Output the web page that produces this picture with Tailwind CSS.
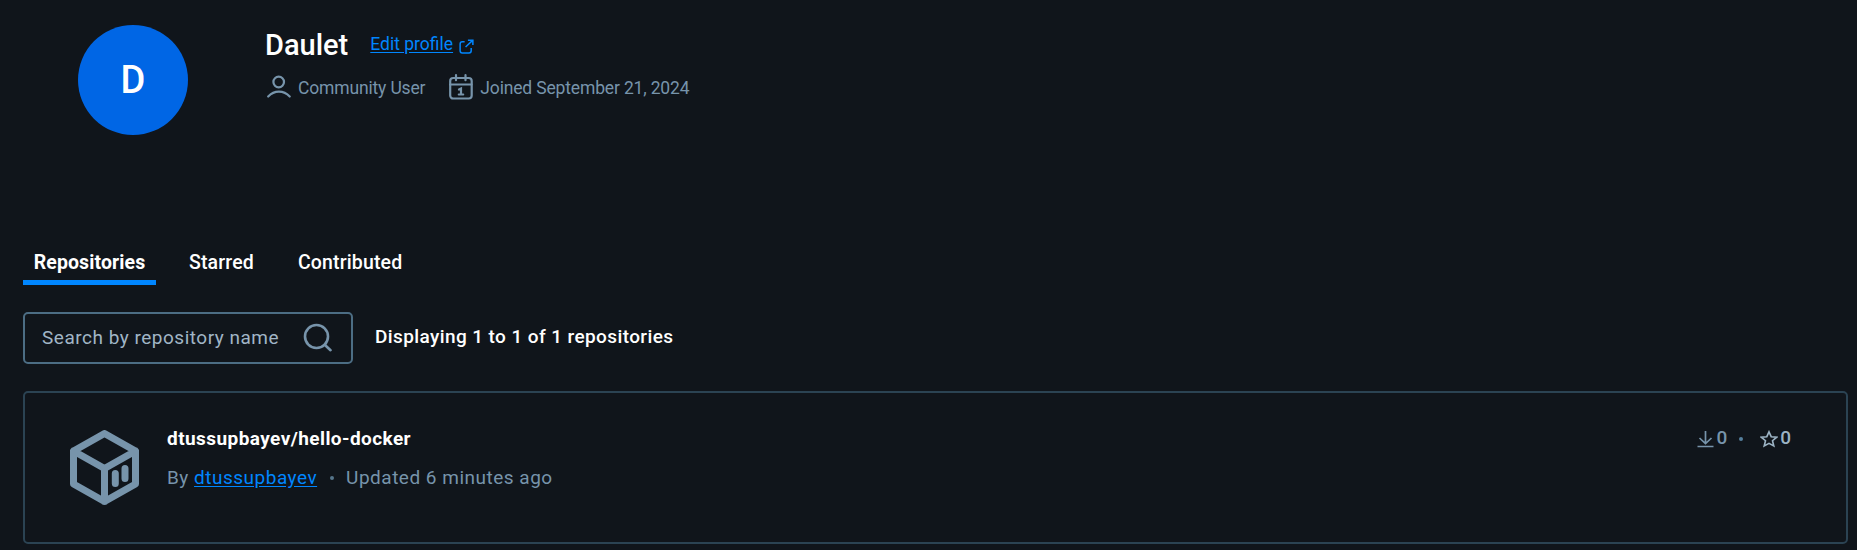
<!DOCTYPE html>
<html lang="en">
<head>
<meta charset="utf-8">
<title>Daulet</title>
<script src="https://cdn.jsdelivr.net/npm/@tailwindcss/browser@4"></script>
</head>
<body class="bg-[#10151b] font-['Roboto','Liberation_Sans',sans-serif] text-white h-[550px] overflow-hidden">
<header class="flex h-[233px] pl-[78px] pt-[25px]">
  <div class="flex size-[110px] shrink-0 items-center justify-center rounded-full bg-[#0066e5] text-[38px] font-medium">D</div>
  <div class="ml-[77px]">
    <div class="flex h-[38px] items-center">
      <h1 class="pt-px text-[29px] font-medium leading-[38px]">Daulet</h1>
      <a class="ml-[22px] flex items-center pt-px text-[17.5px] text-[#0086ff]"><span class="underline underline-offset-2">Edit profile</span>
        <svg class="ml-[6px] mt-[4px] size-[15px]" viewBox="0 0 16 16" fill="none" stroke="currentColor" stroke-width="1.6"><path d="M6 3H3.500A2.300 2.300 0 0 0 1.200 5.300v7.200a2.300 2.300 0 0 0 2.300 2.300h7.200a2.300 2.300 0 0 0 2.300-2.300V9.500M7 8.500 14.500 1.500M9.500 1.200h5.300v5.300"/></svg>
      </a>
    </div>
    <div class="mt-[9px] flex h-[32px] items-center text-[17.5px] tracking-[-0.16px] text-[#7794ab]">
      <svg class="ml-[2px] -mt-[2px] size-[24px]" viewBox="0 0 24 24" fill="none" stroke="currentColor" stroke-width="2.200" stroke-linecap="round"><circle cx="11.700" cy="7" r="5.300"/><path d="M1.200 21.500c6-6.500 15.500-6.500 21.500 0"/></svg>
      <span class="ml-[7px]">Community User</span>
      <svg class="-mt-[2px] ml-[24px] h-[26px] w-[24px]" viewBox="0 0 24 26" fill="none" stroke="currentColor" stroke-width="2.200" stroke-linecap="round"><rect x="1.200" y="4" width="21.500" height="20.500" rx="3"/><path d="M1 10.500h21.500M7 1.200v5M16.500 1.200v5"/><path d="M10 15.500l2-1v6M9.800 20.500h4.400"/></svg>
      <span class="ml-[7px]">Joined September 21, 2024</span>
    </div>
  </div>
</header>
<main class="pl-[23px] pr-[9px]">
  <nav class="flex h-[52px] text-[19.5px] font-medium tracking-[0.15px]">
    <a class="flex h-[52px] w-[133px] items-start justify-center border-b-5 border-[#0086ff] pt-[15px] font-bold tracking-[0.1px]">Repositories</a>
    <a class="ml-[33px] pt-[15px]">Starred</a>
    <a class="ml-[44px] pt-[15px]">Contributed</a>
  </nav>
  <div class="mt-[27px] flex h-[52px] items-center">
    <div class="flex h-[52px] w-[330px] items-center rounded-[5px] border-2 border-[#4c6d84] pl-[17px] text-[19px] tracking-[0.51px] text-[#a1b5c6]">
      <span>Search by repository name</span>
      <svg class="-mt-px ml-auto mr-[19px] size-[29px]" viewBox="0 0 29 29" fill="none" stroke="#7794ab" stroke-width="2.600" stroke-linecap="round"><circle cx="13.500" cy="13.500" r="11.500"/><path d="m21.700 21.700 5.800 5.500"/></svg>
    </div>
    <p class="-mt-[2px] ml-[22px] text-[19px] font-medium tracking-[0.4px]">Displaying 1 to 1 of 1 repositories</p>
  </div>
  <article class="mt-[27px] flex h-[153px] rounded-[5px] border-2 border-[#2b4353] text-[19px]">
    <svg class="ml-[45px] mt-[37px] h-[75px] w-[69px]" viewBox="0 0 69 75" fill="none" stroke="#7794ab" stroke-width="7" stroke-linejoin="round" stroke-linecap="round"><path d="M34.500 3.500 65.500 21v33L34.500 71.500 3.500 54V21zM3.500 21l31 17.500 31-17.500M34.500 38.500v33M45.300 43.500v10M55 38.500v10"/></svg>
    <div class="ml-[28px] mt-[31px]">
      <h2 class="h-[29px] leading-[29px] font-bold tracking-[0.43px]">dtussupbayev/hello-docker</h2>
      <p class="mt-[10px] flex h-[29px] items-center leading-[29px] tracking-[0.5px] text-[#7794ab]"><span>By <a class="text-[#0086ff] underline underline-offset-2">dtussupbayev</a></span><span class="ml-[13px] mr-[12px] size-[4px] rounded-full bg-[#56758b]"></span><span>Updated 6 minutes ago</span></p>
    </div>
    <div class="ml-auto mr-[55px] mt-[31px] flex h-[29px] items-center font-medium text-[#7794ab]">
      <svg class="h-[18px] w-[17px]" viewBox="0 0 17 18" fill="none" stroke="currentColor" stroke-width="1.700"><path d="M8.500 1v12.500M2.500 8l6 5.700 6-5.700M.5 16.500h16"/></svg>
      <span class="ml-[2px]">0</span>
      <span class="mx-[12px] size-[4px] rounded-full bg-[#56809d]"></span>
      <svg class="ml-[5px] size-[18px]" viewBox="0 0 18 18" fill="none" stroke="#9cb3c4" stroke-width="1.600"><path d="m9 1.800 2.200 4.900 5.500.5-4.200 3.500 1.300 5.300L9 13.300 4.200 16l1.300-5.300L1.300 7.200l5.500-.5z"/></svg>
      <span class="ml-[2px] text-[#9cb3c4]">0</span>
    </div>
  </article>
</main>
</body>
</html>
